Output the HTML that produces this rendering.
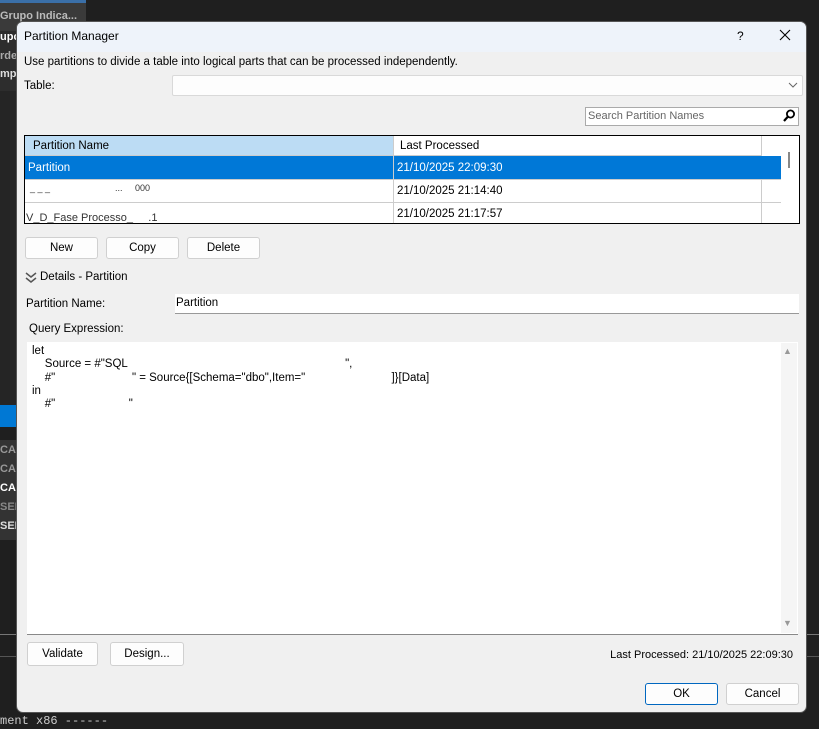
<!DOCTYPE html>
<html><head><meta charset="utf-8"><style>
*{box-sizing:border-box;margin:0;padding:0}
body{width:819px;height:729px;background:#1f1f1f;position:relative;overflow:hidden;font-family:"Liberation Sans",sans-serif;font-size:11.5px;color:#000}
.a{position:absolute}
.btn{position:absolute;background:#fdfdfd;border:1px solid #d0d0d0;border-radius:3px;text-align:center;font-size:11.5px}
.t{position:absolute;white-space:nowrap}
</style></head><body>
<div class="a" style="left:0;top:0;width:86px;height:3px;background:#3a6fa8"></div>
<div class="a" style="left:0;top:3px;width:86px;height:28px;background:#3a3a3a"></div>
<div class="t" style="left:0;top:10px;color:#bbb;font-weight:bold;font-size:11px">Grupo Indica...</div>
<div class="a" style="left:0;top:31px;width:16px;height:60px;background:#2d2d2d"></div>
<div class="t" style="left:0;top:31px;color:#fff;font-weight:bold;font-size:11px">upo</div>
<div class="t" style="left:0;top:50px;color:#aaa;font-weight:bold;font-size:11px">rde</div>
<div class="t" style="left:0;top:68px;color:#ddd;font-weight:bold;font-size:11px">mp</div>
<div class="a" style="left:0;top:91px;width:16px;height:314px;background:#252525"></div>
<div class="a" style="left:0;top:405px;width:16px;height:22px;background:#0078d4"></div>
<div class="a" style="left:0;top:440px;width:16px;height:100px;background:#333"></div>
<div class="t" style="left:0;top:444px;color:#999;font-weight:bold;font-size:11px">CAO</div>
<div class="t" style="left:0;top:463px;color:#999;font-weight:bold;font-size:11px">CAO</div>
<div class="t" style="left:0;top:482px;color:#fff;font-weight:bold;font-size:11px">CAO</div>
<div class="t" style="left:0;top:501px;color:#888;font-weight:bold;font-size:11px">SER</div>
<div class="t" style="left:0;top:520px;color:#ddd;font-weight:bold;font-size:11px">SER</div>
<div class="a" style="left:0;top:634px;width:819px;height:1px;background:#777"></div>
<div class="a" style="left:0;top:656px;width:819px;height:1px;background:#555"></div>
<div class="t" style="left:0;top:714px;color:#ccc;font-family:'Liberation Mono',monospace;font-size:12px">ment x86 ------</div>
<div class="a" style="left:16px;top:21px;width:791px;height:692px;background:#f0f0f0;border:1px solid #555;border-radius:7px;overflow:hidden">
 <div class="a" style="left:0;top:0;width:791px;height:30px;background:#eef3fa"></div>
</div>
<div class="t" style="left:24px;top:29px;font-size:12px">Partition Manager</div>
<div class="t" style="left:737px;top:29px;font-size:12px">?</div>
<svg class="a" style="left:779px;top:29px" width="12" height="12"><path d="M1 1L11 11M11 1L1 11" stroke="#000" stroke-width="1.1"/></svg>
<div class="t" style="left:24px;top:56px">Use partitions to divide a table into logical parts that can be processed independently.</div>
<div class="t" style="left:24px;top:80px">Table:</div>
<div class="a" style="left:172px;top:75px;width:631px;height:21px;background:#fdfdfd;border:1px solid #d9d9d9;border-radius:2px"></div>
<svg class="a" style="left:788px;top:82px" width="10" height="6"><path d="M1 1L5 5L9 1" fill="none" stroke="#666"/></svg>
<div class="a" style="left:585px;top:107px;width:214px;height:19px;background:#fff;border:1px solid #aaa"></div>
<div class="t" style="left:588px;top:110px;color:#666;font-size:11px">Search Partition Names</div>
<svg class="a" style="left:782px;top:108px" width="14" height="16"><circle cx="8.5" cy="6" r="3.6" fill="none" stroke="#000" stroke-width="1.8"/><line x1="6" y1="8.5" x2="2" y2="13" stroke="#000" stroke-width="2.2"/></svg>
<div class="a" style="left:24px;top:135px;width:776px;height:89px;background:#fff;border:1px solid #000"></div>
<div class="a" style="left:25px;top:136px;width:368px;height:20px;background:#bcdcf4;border-bottom:1px solid #ccc"></div>
<div class="a" style="left:393px;top:136px;width:368px;height:20px;border-left:1px solid #ccc;border-bottom:1px solid #ccc"></div>
<div class="a" style="left:761px;top:136px;width:20px;height:87px;border-left:1px solid #ccc"></div>
<div class="t" style="left:33px;top:140px">Partition Name</div>
<div class="t" style="left:400px;top:140px">Last Processed</div>
<div class="a" style="left:25px;top:156px;width:756px;height:23px;background:#0078d7"></div>
<div class="a" style="left:393px;top:156px;width:1px;height:67px;background:#ccc"></div>
<div class="a" style="left:25px;top:202px;width:756px;height:1px;background:#ccc"></div>
<div class="a" style="left:25px;top:179px;width:756px;height:1px;background:#ccc"></div>
<div class="t" style="left:28px;top:162px;color:#fff">Partition</div>
<div class="t" style="left:397px;top:185px;top:185px">21/10/2025 21:14:40</div>
<div class="t" style="left:397px;top:162px;color:#fff">21/10/2025 22:09:30</div>
<div class="t" style="left:397px;top:208px">21/10/2025 21:17:57</div>
<div class="t" style="left:30px;top:183px;font-size:9px;color:#333">_ _ _&nbsp;&nbsp;&nbsp;&nbsp;&nbsp;&nbsp;&nbsp;&nbsp;&nbsp;&nbsp;&nbsp;&nbsp;&nbsp;&nbsp;&nbsp;&nbsp;&nbsp;&nbsp;&nbsp;&nbsp;&nbsp;&nbsp;&nbsp;&nbsp;&nbsp; ...&nbsp;&nbsp;&nbsp;&nbsp; 000</div>
<div class="t" style="left:26px;top:212px;font-size:11px;color:#333">V_D_Fase Processo_&nbsp;&nbsp;&nbsp;&nbsp; .1</div>
<div class="a" style="left:25px;top:203px;width:130px;height:9px;background:#fff"></div>
<div class="a" style="left:788px;top:152px;width:2px;height:16px;background:#888"></div>
<div class="btn" style="left:25px;top:237px;width:73px;height:22px;line-height:20px">New</div>
<div class="btn" style="left:106px;top:237px;width:73px;height:22px;line-height:20px">Copy</div>
<div class="btn" style="left:187px;top:237px;width:73px;height:22px;line-height:20px">Delete</div>
<svg class="a" style="left:25px;top:272px" width="12" height="12"><path d="M1 1L6 5L11 1M1 6L6 10L11 6" fill="none" stroke="#555" stroke-width="1.5"/></svg>
<div class="t" style="left:40px;top:271px">Details - Partition</div>
<div class="t" style="left:26px;top:298px">Partition Name:</div>
<div class="a" style="left:175px;top:294px;width:624px;height:20px;background:#fff;border-bottom:1px solid #999"></div>
<div class="t" style="left:176px;top:297px">Partition</div>
<div class="t" style="left:29px;top:323px">Query Expression:</div>
<div class="a" style="left:27px;top:342px;width:771px;height:293px;background:#fff;border-bottom:1px solid #888"></div>
<div class="a" style="left:781px;top:343px;width:16px;height:290px;background:#f5f5f5"></div>
<div class="t" style="left:783px;top:346px;color:#999;font-size:9px">▲</div>
<div class="t" style="left:783px;top:618px;color:#999;font-size:9px">▼</div>
<div class="t" style="left:32px;top:345px;line-height:13.3px">let<br>&nbsp;&nbsp;&nbsp;&nbsp;Source = #"SQL&nbsp;&nbsp;&nbsp;&nbsp;&nbsp;&nbsp;&nbsp;&nbsp;&nbsp;&nbsp;&nbsp;&nbsp;&nbsp;&nbsp;&nbsp;&nbsp;&nbsp;&nbsp;&nbsp;&nbsp;&nbsp;&nbsp;&nbsp;&nbsp;&nbsp;&nbsp;&nbsp;&nbsp;&nbsp;&nbsp;&nbsp;&nbsp;&nbsp;&nbsp;&nbsp;&nbsp;&nbsp;&nbsp;&nbsp;&nbsp;&nbsp;&nbsp;&nbsp;&nbsp;&nbsp;&nbsp;&nbsp;&nbsp;&nbsp;&nbsp;&nbsp;&nbsp;&nbsp;&nbsp;&nbsp;&nbsp;&nbsp;&nbsp;&nbsp;&nbsp;&nbsp;&nbsp;&nbsp;&nbsp;&nbsp;&nbsp;&nbsp; ",<br>&nbsp;&nbsp;&nbsp;&nbsp;#"&nbsp;&nbsp;&nbsp;&nbsp;&nbsp;&nbsp;&nbsp;&nbsp;&nbsp;&nbsp;&nbsp;&nbsp;&nbsp;&nbsp;&nbsp;&nbsp;&nbsp;&nbsp;&nbsp;&nbsp;&nbsp;&nbsp;&nbsp; " = Source{[Schema="dbo",Item="&nbsp;&nbsp;&nbsp;&nbsp;&nbsp;&nbsp;&nbsp;&nbsp;&nbsp;&nbsp;&nbsp;&nbsp;&nbsp;&nbsp;&nbsp;&nbsp;&nbsp;&nbsp;&nbsp;&nbsp;&nbsp;&nbsp;&nbsp;&nbsp;&nbsp;&nbsp; ]}[Data]<br>in<br>&nbsp;&nbsp;&nbsp;&nbsp;#"&nbsp;&nbsp;&nbsp;&nbsp;&nbsp;&nbsp;&nbsp;&nbsp;&nbsp;&nbsp;&nbsp;&nbsp;&nbsp;&nbsp;&nbsp;&nbsp;&nbsp;&nbsp;&nbsp;&nbsp;&nbsp;&nbsp; "</div>
<div class="btn" style="left:27px;top:642px;width:71px;height:24px;line-height:22px">Validate</div>
<div class="btn" style="left:110px;top:642px;width:74px;height:24px;line-height:22px">Design...</div>
<div class="t" style="right:26px;top:649px;font-size:11px">Last Processed: 21/10/2025 22:09:30</div>
<div class="btn" style="left:645px;top:683px;width:73px;height:22px;line-height:20px;border-color:#0067c0">OK</div>
<div class="btn" style="left:726px;top:683px;width:73px;height:22px;line-height:20px">Cancel</div>
</body></html>
